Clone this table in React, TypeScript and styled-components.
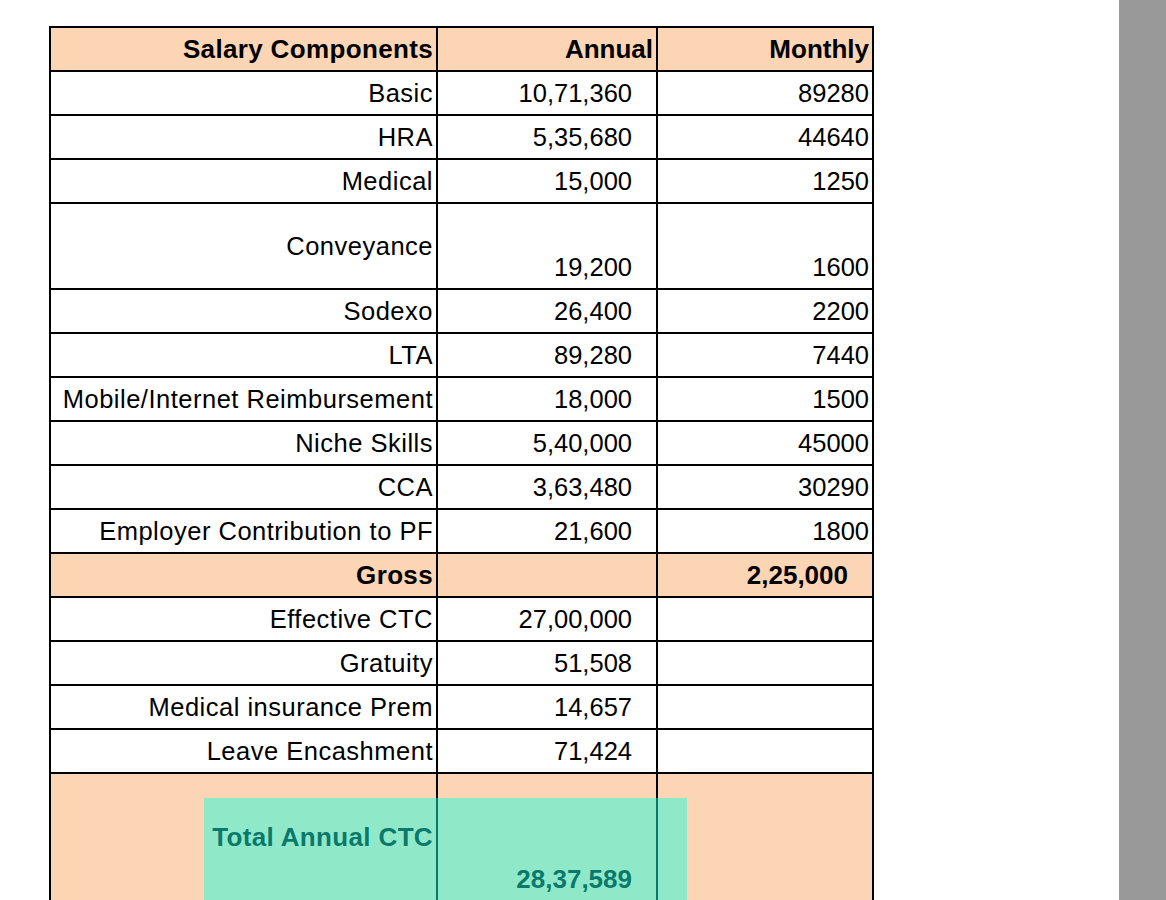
import styled, { createGlobalStyle } from "styled-components";

const GlobalStyle = createGlobalStyle`
  html, body {
    margin: 0;
    padding: 0;
    height: 100%;
    overflow: hidden;
    background: #ffffff;
  }
  #root {
    height: 100%;
  }
`;

const Page = styled.div`
  display: flex;
  height: 100vh;
  width: 100%;
  overflow: hidden;
  font-family: "Liberation Sans", Arial, Helvetica, sans-serif;
  color: #000;
`;

const Sheet = styled.div`
  flex: 1;
  padding: 26px 0 0 49px;
`;

const SideGutter = styled.div`
  width: 47px;
  flex-shrink: 0;
  background: #999999;
`;

const TableWrap = styled.div`
  position: relative;
  display: inline-block;
`;

const Table = styled.table`
  border-collapse: collapse;
  border: 2px solid #000;
  table-layout: fixed;
  width: 823px;
`;

const Row = styled.tr<{ $tint?: boolean; $h?: number }>`
  height: ${({ $h }) => $h ?? 44}px;
  background: ${({ $tint }) => ($tint ? "#fcd5b4" : "#ffffff")};
`;

const Cell = styled.td<{
  $bold?: boolean;
  $align?: "middle" | "bottom";
  $padRight?: number;
}>`
  border: 2px solid #000;
  padding: 0 ${({ $padRight }) => $padRight ?? 3}px
    ${({ $align }) => ($align === "bottom" ? 6 : 0)}px 0;
  text-align: right;
  vertical-align: ${({ $align }) => $align ?? "middle"};
  font-size: ${({ $bold }) => ($bold ? 26 : 25.5)}px;
  font-weight: ${({ $bold }) => ($bold ? 700 : 400)};
  line-height: 30px;
  white-space: nowrap;
  overflow: hidden;
`;

// first column: the row names run a little wider than the figures
const LabelCell = styled(Cell)`
  letter-spacing: ${({ $bold }) => ($bold ? 0.35 : 0.5)}px;
`;

const SelectionBox = styled.div`
  position: absolute;
  left: 155px;
  top: 772px;
  width: 483px;
  height: 200px;
  background: rgba(21, 255, 225, 0.47);
  pointer-events: none;
`;

type Line = {
  label: string;
  annual?: string;
  monthly?: string;
  tall?: boolean;
};

const lines: Line[] = [
  { label: "Basic", annual: "10,71,360", monthly: "89280" },
  { label: "HRA", annual: "5,35,680", monthly: "44640" },
  { label: "Medical", annual: "15,000", monthly: "1250" },
  { label: "Conveyance", annual: "19,200", monthly: "1600", tall: true },
  { label: "Sodexo", annual: "26,400", monthly: "2200" },
  { label: "LTA", annual: "89,280", monthly: "7440" },
  { label: "Mobile/Internet Reimbursement", annual: "18,000", monthly: "1500" },
  { label: "Niche Skills", annual: "5,40,000", monthly: "45000" },
  { label: "CCA", annual: "3,63,480", monthly: "30290" },
  { label: "Employer Contribution to PF", annual: "21,600", monthly: "1800" },
];

const extras: Line[] = [
  { label: "Effective CTC", annual: "27,00,000" },
  { label: "Gratuity", annual: "51,508" },
  { label: "Medical insurance Prem", annual: "14,657" },
  { label: "Leave Encashment", annual: "71,424" },
];

const LineRow = ({ line }: { line: Line }) => (
  <Row $h={line.tall ? 86 : 44}>
    <LabelCell>{line.label}</LabelCell>
    <Cell $align="bottom" $padRight={24}>
      {line.annual}
    </Cell>
    <Cell $align="bottom">{line.monthly}</Cell>
  </Row>
);

export default function App() {
  return (
    <>
      <GlobalStyle />
      <Page>
        <Sheet>
          <TableWrap>
            <Table>
              <colgroup>
                <col style={{ width: 387 }} />
                <col style={{ width: 220 }} />
                <col style={{ width: 216 }} />
              </colgroup>
              <tbody>
                <Row $tint>
                  <LabelCell $bold>Salary Components</LabelCell>
                  <Cell $bold>Annual</Cell>
                  <Cell $bold>Monthly</Cell>
                </Row>
                {lines.map((l) => (
                  <LineRow key={l.label} line={l} />
                ))}
                <Row $tint>
                  <LabelCell $bold>Gross</LabelCell>
                  <Cell />
                  <Cell $bold $padRight={24}>
                    2,25,000
                  </Cell>
                </Row>
                {extras.map((l) => (
                  <LineRow key={l.label} line={l} />
                ))}
                <Row $tint $h={128}>
                  <LabelCell $bold>Total Annual CTC</LabelCell>
                  <Cell $bold $align="bottom" $padRight={24}>
                    28,37,589
                  </Cell>
                  <Cell />
                </Row>
              </tbody>
            </Table>
            <SelectionBox />
          </TableWrap>
        </Sheet>
        <SideGutter />
      </Page>
    </>
  );
}
